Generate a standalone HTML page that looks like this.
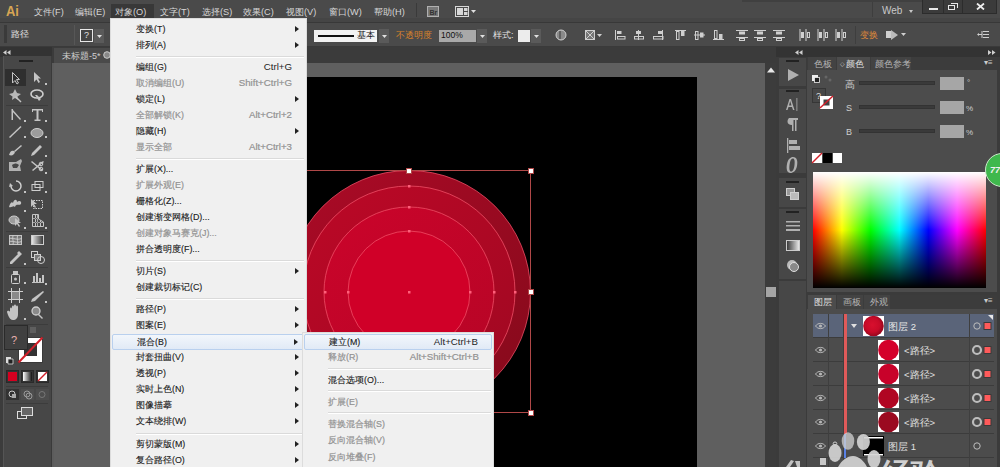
<!DOCTYPE html>
<html><head><meta charset="utf-8">
<style>
*{box-sizing:border-box;margin:0;padding:0}
html,body{width:1000px;height:467px;overflow:hidden;background:#5c5c5c;font-family:"Liberation Sans",sans-serif;}
.a{position:absolute}
.t{position:absolute;white-space:nowrap;line-height:1}
#menubar{left:0;top:0;width:1000px;height:23px;background:linear-gradient(#4a4a4a 0 18px,#454545 18px 22px,#383838 22px)}
#menubar .t{color:#d6d6d6;font-size:9.2px;top:8px}
#ctrl{left:0;top:23px;width:1000px;height:24px;background:#4a4a4a;border-bottom:1px solid #3a3a3a}
#ctrl .t{color:#e0e0e0;font-size:9.5px}
#ctrl > *{margin-top:-2px}
#tools{left:0;top:47px;width:52px;height:420px;background:#3c3c3c}
#tabstrip{left:52px;top:47px;width:726px;height:16px;background:#3b3b3b}
#canvas{left:54px;top:63px;width:711px;height:404px;background:#5f5f5f}
#artboard{left:280px;top:77px;width:417px;height:390px;background:#000}
#vscroll{left:765px;top:63px;width:12px;height:404px;background:#3c3c3c}
#iconcol{left:776px;top:47px;width:32px;height:420px;background:#3b3b3b}
#panel{left:806px;top:47px;width:194px;height:420px;background:#3b3b3b}
.menu{background:#f0f0f0;border:1px solid #dcdcdc}
.menu .gut{display:none}
.mi{position:absolute;left:1px;right:1px;height:16px}
.mi .l{position:absolute;left:24px;top:2.5px;font-size:8.9px;color:#1a1a1a;-webkit-text-stroke:0.12px #1a1a1a;white-space:nowrap;line-height:1.1}
.mi .r{position:absolute;right:13px;top:2px;font-size:9.7px;color:#1e1e1e;white-space:nowrap;line-height:1.1}
.mi.d .l,.mi.d .r{color:#8d8d8d;-webkit-text-stroke:0.2px #9a9a9a}
.mi .ar{position:absolute;right:6px;top:4px;width:0;height:0;border-left:4px solid #222;border-top:3px solid transparent;border-bottom:3px solid transparent}
.sep{position:absolute;left:25px;right:2px;height:2px;border-top:1px solid #dadada;border-bottom:1px solid #fff}
.hl{background:linear-gradient(#f2f6fb,#e1eaf6);border:1px solid #b9d0ee;border-radius:2px}
.ico{position:absolute}
.tabs .t{font-size:9px;color:#bdbdbd}
</style></head><body>

<!-- MENU BAR -->
<div id="menubar" class="a">
    <div class="t" style="left:6px;top:3px;font-size:15px;font-weight:bold;color:#d8a654;transform:scaleX(.86);transform-origin:0 0">Ai</div>
  <div class="t" style="left:34px">文件(F)</div>
  <div class="t" style="left:75px">编辑(E)</div>
  <div class="a" style="left:111px;top:4px;width:43px;height:14px;background:#383838"></div>
  <div class="t" style="left:115px">对象(O)</div>
  <div class="t" style="left:160px">文字(T)</div>
  <div class="t" style="left:202px">选择(S)</div>
  <div class="t" style="left:243px">效果(C)</div>
  <div class="t" style="left:286px">视图(V)</div>
  <div class="t" style="left:329px">窗口(W)</div>
  <div class="t" style="left:374px">帮助(H)</div>
  <div class="a" style="left:416px;top:3px;width:1px;height:14px;background:#3a3a3a"></div>
  <svg class="a" style="left:420px;top:0" width="60" height="20">
   <rect x="7.5" y="6.5" width="11" height="10" fill="#787878" stroke="#b0b0b0"/>
   <text x="9.5" y="14.5" font-size="7" font-weight="bold" fill="#333" font-family="Liberation Sans">Br</text>
   <rect x="35.5" y="6.5" width="13" height="10" fill="#494949" stroke="#d8d8d8"/>
   <rect x="37" y="8" width="6" height="7" fill="#d8d8d8"/>
   <rect x="44" y="8" width="3.5" height="3" fill="#d8d8d8"/><rect x="44" y="12" width="3.5" height="3" fill="#d8d8d8"/>
   <path d="M51 10 H56 L53.5 13Z" fill="#e0e0e0"/>
  </svg>
  
  
  <div class="a" style="left:742px;top:0;width:180px;height:2px;background:#404040"></div><div class="a" style="left:872px;top:2px;width:1px;height:15px;background:#3e3e3e"></div>
  <div class="t" style="left:882px;top:6px;font-size:10px;color:#c8c8c8">Web</div>
  <svg class="a" style="left:909px;top:10px" width="4" height="3"><path d="M0 0 H4 L2 3Z" fill="#c8c8c8"/></svg>
  <div class="a" style="left:922px;top:0;width:75px;height:14px;background:#3b3b3b;border:1px solid #2c2c2c;border-top:none"></div>
  <div class="a" style="left:943px;top:0;width:1px;height:13px;background:#2c2c2c"></div>
  <div class="a" style="left:962px;top:0;width:1px;height:13px;background:#2c2c2c"></div>
  <div class="a" style="left:929px;top:8px;width:9px;height:2px;background:#e8e8e8"></div>
  <div class="a" style="left:948px;top:5px;width:7px;height:5px;border:1px solid #e8e8e8"></div>
  <div class="a" style="left:951px;top:3px;width:7px;height:5px;border:1.2px solid #e8e8e8;border-left:none;border-bottom:none"></div>
  <svg class="a" style="left:976px;top:3px" width="9" height="7"><path d="M1 0.5 L8 6.5 M8 0.5 L1 6.5" stroke="#eee" stroke-width="1.8"/></svg>
</div>

<!-- CONTROL BAR -->
<div id="ctrl" class="a">
  <div class="a" style="left:4px;top:4px;width:3px;height:18px;background:#3a3a3a"></div>
  <div class="t" style="left:11px;top:9px;font-size:9px">路径</div><div class="a" style="left:74px;top:4px;width:1px;height:20px;background:#575757"></div>
  <div class="a" style="left:80px;top:8px;width:13px;height:13px;border:1px solid #e8e8e8;background:#444"></div>
  <div class="t" style="left:84px;top:10px;font-size:9px">?</div>
  <div class="a" style="left:94px;top:8px;width:10px;height:14px;background:#5a5a5a"></div><svg class="a" style="left:97px;top:14px" width="5" height="3"><path d="M0 0H5L2.5 3Z" fill="#e0e0e0"/></svg>
  <div class="a" style="left:314px;top:9px;width:63px;height:12px;background:#f2f2f2"></div>
  <div class="a" style="left:318px;top:14px;width:36px;height:2px;background:#111"></div>
  <div class="t" style="left:357px;top:10px;color:#111;font-size:9px">基本</div>
  <div class="a" style="left:379px;top:8px;width:10px;height:14px;background:#5a5a5a"></div><svg class="a" style="left:382px;top:14px" width="5" height="3"><path d="M0 0H5L2.5 3Z" fill="#e0e0e0"/></svg>
  <div class="t" style="left:396px;top:10px;color:#d9822b;font-size:9px">不透明度</div>
  <div class="a" style="left:439px;top:9px;width:37px;height:12px;background:#a9a9a9"></div>
  <div class="t" style="left:441px;top:10px;color:#111;font-size:8.5px">100%</div>
  <div class="a" style="left:477px;top:8px;width:10px;height:14px;background:#5a5a5a"></div><svg class="a" style="left:480px;top:14px" width="5" height="3"><path d="M0 0H5L2.5 3Z" fill="#e0e0e0"/></svg>
  <div class="t" style="left:493px;top:10px;font-size:9px">样式:</div>
  <div class="a" style="left:518px;top:9px;width:12px;height:12px;background:#ececec"></div>
  <div class="a" style="left:531px;top:8px;width:10px;height:14px;background:#5a5a5a"></div><svg class="a" style="left:534px;top:14px" width="5" height="3"><path d="M0 0H5L2.5 3Z" fill="#e0e0e0"/></svg>
  <svg class="a" style="left:0;top:-1px" width="1000" height="27" viewBox="0 20 1000 27">
<g fill="#cfcfcf">
<circle cx="561" cy="35" r="5" fill="#8a8a8a" stroke="#cfcfcf" stroke-width="1"/><path d="M560 31 v8" stroke="#444" stroke-width="1.2"/>
<rect x="585.5" y="30.5" width="9" height="9" fill="#777" stroke="#cfcfcf"/><path d="M586 31 L594 39 M594 31 L586 39" stroke="#cfcfcf"/><path d="M597 34 h5 l-2.5 3Z"/>
<rect x="615.0" y="30" width="1" height="10"/><rect x="617" y="31" width="4.5" height="3"/><rect x="617.5" y="36.5" width="7.5" height="2.5" fill="none" stroke="#cfcfcf" stroke-width="1"/>
<rect x="638.0" y="30" width="1" height="10"/><rect x="636" y="31" width="5" height="3"/><rect x="634.5" y="36.5" width="9" height="2.5" fill="none" stroke="#cfcfcf" stroke-width="1"/>
<rect x="662.0" y="30" width="1" height="10"/><rect x="658" y="31" width="4.5" height="3"/><rect x="653.5" y="36.5" width="9.5" height="2.5" fill="none" stroke="#cfcfcf" stroke-width="1"/>
<rect x="675" y="30.0" width="11" height="1"/><rect x="676.5" y="31.5" width="2.5" height="8" fill="none" stroke="#cfcfcf"/><rect x="681" y="31" width="3.5" height="5"/>
<rect x="694" y="34.5" width="11" height="1"/><rect x="695.5" y="31.5" width="2.5" height="8" fill="none" stroke="#cfcfcf"/><rect x="700" y="32.5" width="3.5" height="5"/>
<rect x="713" y="39.0" width="11" height="1"/><rect x="714.5" y="30.5" width="2.5" height="8" fill="none" stroke="#cfcfcf"/><rect x="719" y="34" width="3.5" height="5"/>
<rect x="736" y="30" width="12" height="1"/><rect x="736" y="37" width="12" height="1"/><rect x="739" y="31.5" width="6" height="3"/><rect x="739.5" y="38.5" width="5" height="2" fill="none" stroke="#cfcfcf"/>
<rect x="754" y="30" width="12" height="1"/><rect x="754" y="37" width="12" height="1"/><rect x="757" y="31.5" width="6" height="3"/><rect x="757.5" y="38.5" width="5" height="2" fill="none" stroke="#cfcfcf"/>
<rect x="773" y="30" width="12" height="1"/><rect x="773" y="37" width="12" height="1"/><rect x="776" y="31.5" width="6" height="3"/><rect x="776.5" y="38.5" width="5" height="2" fill="none" stroke="#cfcfcf"/>
<rect x="799.5" y="29" width="1" height="12"/><rect x="805.5" y="29" width="1" height="12"/><rect x="801" y="32" width="3" height="6" /><rect x="807.5" y="32.5" width="2" height="5" fill="none" stroke="#cfcfcf"/>
<rect x="817.5" y="29" width="1" height="12"/><rect x="823.5" y="29" width="1" height="12"/><rect x="819" y="32" width="3" height="6" /><rect x="825.5" y="32.5" width="2" height="5" fill="none" stroke="#cfcfcf"/>
<rect x="835.5" y="29" width="1" height="12"/><rect x="841.5" y="29" width="1" height="12"/><rect x="837" y="32" width="3" height="6" /><rect x="843.5" y="32.5" width="2" height="5" fill="none" stroke="#cfcfcf"/>
<rect x="855" y="26" width="1" height="18" fill="#3e3e3e"/>
<rect x="886" y="31" width="6" height="7"/><path d="M891 30 L898 35 L891 40Z" fill="#bbb"/><path d="M901 33 h5 l-2.5 3Z"/>
<path d="M978 34.5 h4 M982 31 v7" stroke="#cfcfcf"/><rect x="983" y="31" width="6" height="1"/><rect x="983" y="34" width="6" height="1"/><rect x="983" y="37" width="6" height="1"/><path d="M977 34.5 l2 -1.5 v3Z"/>
</g></svg>
<div class="t" style="left:860px;top:10px;color:#e08a3a;font-size:9px">变换</div>

</div>

<!-- LEFT TOOLS -->
<div id="tools" class="a">
<div class="a" style="left:0;top:0;width:52px;height:10px;background:#333"></div>
<svg class="a" style="left:3px;top:3px" width="8" height="5"><path d="M0 2.5 L3.5 0 V5Z M4 2.5 L7.5 0 V5Z" fill="#cfcfcf"/></svg>
<div class="a" style="left:3px;top:9px;width:49px;height:411px;background:#474747;border-left:1px solid #555;border-right:1px solid #3a3a3a"></div>
<div class="a" style="left:19px;top:13px;width:14px;height:2px;background:#222"></div>
<div class="a" style="left:5px;top:22px;width:21px;height:17px;background:#2f2f2f"></div>
<svg class="a" style="left:0;top:0" width="52" height="420" viewBox="0 47 52 420">
 <g fill="none" stroke="#c4c4c4" stroke-width="1">
  <!-- selection outline arrow -->
  <path d="M12.5 72.5 L12.5 83 L15 80.5 L17 84 L18.5 83 L16.5 79.5 L19.5 79.5 Z"/>
 </g>
 <g fill="#c4c4c4">
  <!-- direct selection -->
  <path d="M34 72 L34 82 L36.5 79.5 L38.5 83 L40 82 L38 78.5 L41 78.5 Z"/>
  <rect x="45" y="83" width="2" height="2"/>
  <!-- magic wand -->
  <path d="M9 94 L13 93 L15 89 L17 93 L21 94 L17.5 96.5 L18 100 L15 98 L12 100 L12.5 96.5Z" opacity=".9"/>
  <path d="M16 96 L21.5 101.5 L20.5 102.5 L15 97Z"/>
  <!-- lasso -->
  <ellipse cx="37" cy="94" rx="6" ry="4" fill="none" stroke="#cfcfcf" stroke-width="1.6"/>
  <path d="M35 95 L39 101 L41 99 L37 95Z"/>
  <!-- pen -->
  <path d="M12 109 L13 110 L21 119 L20 120 L12 111Z"/>
  <rect x="11.5" y="109" width="1.5" height="11"/>
  <rect x="24" y="120" width="2" height="2"/>
  <!-- T -->
  <path d="M32 109 H43 V112 H42 V110.5 H38.5 V119.5 H40.5 V121 H34.5 V119.5 H36.5 V110.5 H33 V112 H32Z"/>
  <rect x="45" y="120" width="2" height="2"/>
  <!-- line -->
  <path d="M9 137 L20.5 126 L21.5 127 L10 138Z"/>
  <rect x="24" y="136" width="2" height="2"/>
  <!-- ellipse -->
  <ellipse cx="37" cy="133" rx="6" ry="4.5" fill="#9c9c9c" stroke="#cfcfcf" stroke-width="1"/>
  <rect x="45" y="136" width="2" height="2"/>
  <!-- brush -->
  <path d="M21 145 L22 146 L15 152 L14 151Z"/>
  <path d="M9 155 C10 151 12 150 14 151 L15 152 C14 155 12 156 9 155Z"/>
  <!-- pencil -->
  <path d="M40 145 L42 147 L34 155 L31 156 L32 153Z"/>
  <rect x="45" y="155" width="2" height="2"/>
  <!-- blob brush/eraser -->
  <path d="M9 162 L16 162 L21 159 L22 161 L20 166 L21 171 L9 171Z" opacity=".85"/>
  <path d="M12 165 C15 163 17 163 19 165 L17 168 L13 168Z" fill="#474747"/>
  <!-- scissors -->
  <path d="M32 161 L43 170 L42 171 L31 162Z M43 161 L44 162 L33 171 L32 170Z"/>
  <circle cx="41" cy="164" r="1.8" fill="none" stroke="#cfcfcf"/>
  <circle cx="41" cy="169" r="1.8" fill="none" stroke="#cfcfcf"/>
  <rect x="45" y="172" width="2" height="2"/>
  <!-- rotate -->
  <path d="M16 181 A5 5 0 1 1 11 186" fill="none" stroke="#cfcfcf" stroke-width="1.5"/>
  <path d="M10 183 L13 186 L9 187Z"/>
  <rect x="24" y="191" width="2" height="2"/>
  <!-- scale -->
  <rect x="32" y="184.5" width="8" height="6" fill="none" stroke="#cfcfcf"/>
  <rect x="35" y="181.5" width="8" height="6" fill="none" stroke="#cfcfcf"/>
  <rect x="45" y="191" width="2" height="2"/>
  <!-- warp -->
  <path d="M9 207 C10 203 12 201 13 203 C14 199 17 199 17 202 C19 200 22 201 21 204 C19 206 16 203 15 207 C13 205 12 208 9 207Z"/>
  <rect x="24" y="210" width="2" height="2"/>
  <!-- free transform -->
  <rect x="33.5" y="200.5" width="9" height="8" fill="none" stroke="#cfcfcf" stroke-dasharray="1.5 1"/>
  <path d="M31 199 L31 207 L33 205 L35 208 L36 207 L34 204 L37 204Z"/>
  <!-- shape builder -->
  <ellipse cx="14" cy="220" rx="5" ry="4" fill="#9c9c9c" stroke="#cfcfcf"/>
  <path d="M15 218 L15 226 L17 224 L19 227 L20 226 L18 223 L21 223Z"/>
  <rect x="24" y="227" width="2" height="2"/>
  <!-- perspective grid -->
  <path d="M32.5 214.5 V226.5 H43.5 V222 L38.5 219 V214.5 Z" fill="none" stroke="#c4c4c4"/>
  <path d="M35 215 V226 H36 V215Z M37 215 V226 H37.8 V215Z M32.5 218 H38.5 V218.8 H32.5Z M32.5 222 H43.5 V222.8 H32.5Z M40 220 V226 H41 V220.5Z" />
  <rect x="45" y="227" width="2" height="2"/>
  <!-- mesh -->
  <rect x="9.5" y="235.5" width="12" height="9" fill="#777" stroke="#c4c4c4"/>
  <path d="M9.5 238.5 C13 237.5 17 240.5 21.5 238.5 M9.5 241.5 C13 240.5 17 243.5 21.5 241.5 M13 235.5 C12 239 14 242 13 244.5 M17.5 235.5 C16.5 239 18.5 242 17.5 244.5" fill="none" stroke="#d0d0d0" stroke-width=".9"/>
  <!-- gradient -->
  <rect x="31.5" y="235.5" width="12" height="9" fill="url(#tg)" stroke="#cfcfcf"/>
  <!-- eyedropper -->
  <path d="M19 251 L22 254 L20 256 L12 264 L10 264 L10 262 L18 254 L17 253Z"/>
  <rect x="24" y="263" width="2" height="2"/>
  <!-- blend -->
  <rect x="31.5" y="251.5" width="6" height="6" fill="none" stroke="#cfcfcf"/>
  <rect x="34.5" y="254.5" width="6" height="6" fill="#777" stroke="#cfcfcf"/>
  <circle cx="41" cy="260" r="3.5" fill="none" stroke="#cfcfcf"/>
  <!-- symbol sprayer -->
  <rect x="11.5" y="274.5" width="8" height="9" fill="none" stroke="#cfcfcf" rx="1"/>
  <rect x="13" y="271" width="5" height="3"/>
  <circle cx="15.5" cy="279" r="1.5"/>
  <rect x="24" y="282" width="2" height="2"/>
  <!-- graph -->
  <path d="M32 282 H44 V283 H32Z M33 276 h2 v6 h-2Z M36 273 h2 v9 h-2Z M39 278 h2 v4 h-2Z M42 275 h2 v7 h-2Z"/>
  <rect x="45" y="283" width="2" height="2"/>
  <!-- artboard -->
  <rect x="11" y="291" width="9" height="9" fill="#8a8a8a"/>
  <path d="M8 291.5 H23 M8 299.5 H23 M11.5 288 V303 M19.5 288 V303" stroke="#cfcfcf" fill="none"/>
  <!-- slice -->
  <path d="M43 291 L44 292 L35 301 L31 302 L32 299Z"/>
  <rect x="45" y="301" width="2" height="2"/>
  <!-- hand -->
  <path d="M10 312 L10 309 C10 307 12 307 12 309 L12 307 C12 305 14 305 14 307 L14 306 C14 304 16 304 16 306 L16 307 C16 305 18 305 18 307 L18 314 C18 318 16 320 13 320 C11 320 9 318 8 315 L7 312 C7 311 9 310 10 312Z"/>
  <rect x="24" y="318" width="2" height="2"/>
  <!-- zoom -->
  <circle cx="36" cy="311" r="4" fill="#8a8a8a" stroke="#cfcfcf" stroke-width="1.3"/>
  <path d="M38.5 313.5 L43 318 L42 319 L37.5 314.5Z"/>
 </g>
 <defs><linearGradient id="tg"><stop offset="0" stop-color="#eee"/><stop offset="1" stop-color="#333"/></linearGradient>
 <linearGradient id="tg2"><stop offset="0" stop-color="#fff"/><stop offset="1" stop-color="#111"/></linearGradient></defs>
 <!-- separators -->
 <g fill="#3c3c3c">
  <rect x="6" y="105" width="42" height="1"/><rect x="6" y="231" width="42" height="1"/><rect x="6" y="267" width="42" height="1"/><rect x="6" y="324" width="42" height="1"/><rect x="6" y="386" width="42" height="1"/><rect x="6" y="403" width="42" height="1"/>
 </g>
 <!-- fill / stroke -->
 <rect x="18.5" y="337.5" width="24" height="25" fill="#fff" stroke="#3a3a3a"/>
 <rect x="24" y="343" width="13" height="13" fill="#333"/>
 <path d="M18.5 362.5 L42.5 337.5" stroke="#d2202a" stroke-width="2"/>
 <rect x="4.5" y="325.5" width="23" height="24" fill="#404040" stroke="#2a2a2a"/>
 <text x="11" y="344" font-size="11" fill="#e8b0b0" font-family="Liberation Sans">?</text>
 <rect x="30" y="327" width="6" height="6" fill="#777" opacity=".5"/>
 <path d="M6 357 h5 v6 h-5Z" fill="#ddd"/><path d="M8 359 h5 v5 h-5Z" fill="#222" stroke="#ddd" stroke-width=".8"/>
 <!-- color / gradient / none -->
 <rect x="6.5" y="370.5" width="12" height="12" fill="#333" stroke="#2a2a2a"/>
 <rect x="8" y="372" width="9" height="9" fill="#d60020"/>
 <rect x="21.5" y="370.5" width="12" height="12" fill="#333" stroke="#2a2a2a"/>
 <rect x="23" y="372" width="9" height="9" fill="url(#tg2)"/>
 <rect x="36.5" y="370.5" width="12" height="12" fill="#333" stroke="#2a2a2a"/>
 <rect x="38" y="372" width="9" height="9" fill="#fff"/>
 <path d="M38 381 L47 372" stroke="#d2202a" stroke-width="1.5"/>
 <!-- draw modes -->
 <rect x="6" y="389" width="13" height="11" fill="#333"/>
 <rect x="21" y="389" width="13" height="11" fill="#4d4d4d"/>
 <rect x="36" y="389" width="13" height="11" fill="#4d4d4d"/>
 <circle cx="12" cy="394" r="3" fill="none" stroke="#ccc"/><rect x="12" y="394" width="4" height="4" fill="#aaa"/>
 <circle cx="27" cy="394" r="3" fill="none" stroke="#999"/><circle cx="29" cy="396" r="3" fill="none" stroke="#999"/>
 <circle cx="42" cy="394.5" r="3" fill="none" stroke="#777"/>
 <!-- screen mode -->
 <rect x="17.5" y="411.5" width="9" height="7" fill="none" stroke="#ddd"/>
 <rect x="21.5" y="407.5" width="11" height="8" fill="#666" stroke="#ddd"/>
</svg>
</div>

<!-- DOC TAB STRIP -->
<div id="tabstrip" class="a"></div>
<div class="a" style="left:54px;top:48px;width:56px;height:15px;background:#4a4a4a"></div>
<div class="t" style="left:62px;top:52px;font-size:9px;color:#cfcfcf">未标题-5*</div><svg class="a" style="left:103px;top:51px" width="8" height="8"><circle cx="4" cy="4" r="3.3" fill="#888" stroke="#ccc" stroke-width="1"/></svg>
<div id="canvas" class="a"></div>
<div id="artboard" class="a"></div>
<svg class="a" style="left:0;top:0" width="1000" height="467" viewBox="0 0 1000 467">
 <defs>
  <linearGradient id="g1" x1="0.2" y1="0.1" x2="0.9" y2="0.9"><stop offset="0" stop-color="#a60a25"/><stop offset="1" stop-color="#880a1c"/></linearGradient>
  <linearGradient id="g2" x1="0.2" y1="0.1" x2="0.9" y2="0.9"><stop offset="0" stop-color="#b80826"/><stop offset="1" stop-color="#a20822"/></linearGradient>
  <linearGradient id="g3" x1="0.2" y1="0.1" x2="0.9" y2="0.9"><stop offset="0" stop-color="#c8042a"/><stop offset="1" stop-color="#b80526"/></linearGradient>
 </defs>
 <g stroke="#f05068" stroke-width="0.9" stroke-opacity=".85">
  <circle cx="409" cy="292" r="121.5" fill="url(#g1)"/>
  <circle cx="409" cy="292" r="106" fill="url(#g2)"/>
  <circle cx="409" cy="292" r="85" fill="url(#g3)"/>
  <circle cx="409" cy="292" r="61" fill="#d00028"/>
 </g>
 <rect x="287.5" y="170.5" width="243" height="242" fill="none" stroke="#b04848" stroke-width="1"/>
 <g fill="#ff5f7a">
  <rect x="408" y="185" width="2.5" height="2.5"/><rect x="408" y="206" width="2.5" height="2.5"/><rect x="408" y="230" width="2.5" height="2.5"/>
  <rect x="408" y="291" width="2.5" height="2.5"/>
  <rect x="324" y="291" width="2.5" height="2.5"/><rect x="347" y="291" width="2.5" height="2.5"/>
  <rect x="469" y="291" width="2.5" height="2.5"/><rect x="493" y="291" width="2.5" height="2.5"/><rect x="514" y="291" width="2.5" height="2.5"/>
 </g>
 <g fill="#fff" stroke="#b04848" stroke-width="1">
  <rect x="406.5" y="168.5" width="5" height="5"/><rect x="528.5" y="168.5" width="5" height="5"/>
  <rect x="528.5" y="289.5" width="5" height="5"/><rect x="528.5" y="410.5" width="5" height="5"/>
 </g>
</svg>
<div id="vscroll" class="a"></div>
<svg class="a" style="left:767px;top:67px" width="8" height="6"><path d="M0 5.5 L4 0.5 L8 5.5Z" fill="#e8e8e8"/></svg>
<div class="a" style="left:766px;top:287px;width:11px;height:10px;background:#a5a5a5"></div>
<div id="iconcol" class="a">
<div class="a" style="left:0;top:0;width:32px;height:10px;background:#333"></div>
<svg class="a" style="left:19px;top:3px" width="8" height="5"><path d="M0 2.5 L3.5 0 V5Z M4 2.5 L7.5 0 V5Z" fill="#cfcfcf"/></svg>
<div class="a" style="left:3px;top:11px;width:27px;height:28px;background:#474747"></div>
<div class="a" style="left:3px;top:42px;width:27px;height:84px;background:#474747"></div>
<div class="a" style="left:3px;top:131px;width:27px;height:29px;background:#474747"></div>
<div class="a" style="left:3px;top:162px;width:27px;height:70px;background:#474747"></div>
<div class="a" style="left:3px;top:234px;width:27px;height:186px;background:#474747"></div>
<g></g>
<svg class="a" style="left:0;top:0" width="32" height="420" viewBox="776 47 32 420">
 <g fill="#222"><rect x="786" y="60" width="13" height="2"/><rect x="786" y="90" width="13" height="2"/><rect x="786" y="181" width="13" height="2"/><rect x="786" y="211" width="13" height="2"/></g>
 <g fill="#b0b0b0">
  <path d="M788 69 L799 75 L788 81Z" fill="#b0b0b0"/>
  <path d="M786 110 L789.5 99 L791 99 L794.5 110 H793 L792 107 H788.5 L787.5 110Z M789 105.5 H791.5 L790.2 101Z"/>
  <rect x="796.5" y="98" width="0.8" height="13"/>
  <path d="M789 118 H798 V120 H796.5 V131 H795 V120 H793.5 V131 H792 V125 C789 125 787.5 123.5 787.5 121.5 C787.5 119.5 789 118 789 118Z"/>
  <rect x="787" y="138" width="1.3" height="15"/>
  <rect x="789" y="140" width="8" height="4"/><rect x="789" y="146" width="11" height="4"/>
  <path d="M793 157 C797 157 798 161 797 166 C796 171 793 173 790.5 173 C787 173 786 169 787 164 C788 159 790.5 157 793 157Z M792.8 158.5 C791 158.5 790 161 789.5 165 C789 169 789.5 171.5 791 171.5 C793 171.5 794 169 794.5 165 C795 161 794.5 158.5 792.8 158.5Z"/>
  <rect x="786.5" y="188.5" width="8" height="7" fill="#999" stroke="#d0d0d0"/>
  <rect x="790.5" y="192.5" width="8" height="7" fill="#bbb" stroke="#d0d0d0"/>
  <rect x="786" y="221" width="14" height="1.5"/><rect x="786" y="225" width="14" height="1.5"/><rect x="786" y="229" width="14" height="2"/>
  <rect x="786.5" y="240.5" width="13" height="10" fill="url(#icg)" stroke="#ccc"/>
  <circle cx="792" cy="265" r="5" fill="#bbb"/><circle cx="794" cy="267" r="4.5" fill="#888" stroke="#ddd"/>
 </g>
 <defs><linearGradient id="icg"><stop offset="0" stop-color="#333"/><stop offset="1" stop-color="#eee"/></linearGradient></defs>
</svg>
</div>
<div id="panel" class="a">
<div class="a" style="left:0;top:0;width:194px;height:10px;background:#333"></div>
<svg class="a" style="left:182px;top:3px" width="8" height="5"><path d="M3.5 2.5 L0 0 V5Z M7.5 2.5 L4 0 V5Z" fill="#cfcfcf"/></svg>
<!-- color panel -->
<div class="a" style="left:1px;top:10px;width:190px;height:13px;background:#3c3c3c"></div>
<div class="a" style="left:2px;top:10px;width:28px;height:13px;background:#434343"></div>
<div class="a" style="left:31px;top:10px;width:33px;height:13px;background:#4c4c4c"></div>
<div class="a" style="left:65px;top:10px;width:40px;height:13px;background:#434343"></div>
<div class="t" style="left:8px;top:13px;font-size:9px;color:#b5b5b5">色板</div>
<div class="t" style="left:40px;top:13px;font-size:9px;color:#e0e0e0">颜色</div><div class="t" style="left:34px;top:14px;font-size:6px;color:#ddd">◇</div>
<div class="t" style="left:69px;top:13px;font-size:9px;color:#b5b5b5">颜色参考</div>
<div class="t" style="left:178px;top:12px;font-size:8px;color:#ccc">▾≡</div>
<div class="a" style="left:1px;top:23px;width:190px;height:218px;background:#4c4c4c"></div>
<svg class="a" style="left:0;top:0" width="194" height="420" viewBox="806 47 194 420">
 <!-- fill/stroke mini -->
 <rect x="812" y="75" width="6" height="6" fill="#eee"/><rect x="814.5" y="77.5" width="5" height="5" fill="#222" stroke="#eee" stroke-width=".8"/>
 <g fill="#666"><circle cx="826" cy="77" r="1.5"/><circle cx="830" cy="80" r="1.5"/></g>
 <rect x="812.5" y="88.5" width="13" height="14" fill="#474747" stroke="#363636"/>
 <text x="816" y="99" font-size="9" fill="#ddd" font-family="Liberation Sans">?</text>
 <rect x="820" y="96" width="13" height="13" fill="#fff"/>
 <rect x="823.5" y="99.5" width="6" height="6" fill="#444"/>
 <path d="M820 108 L833 96" stroke="#d2202a" stroke-width="1.5"/>
 <!-- sliders -->
 <g font-family="Liberation Sans" font-size="9" fill="#cfcfcf">
  <text x="845" y="87.5" font-size="9.5">高</text><text x="846" y="111">S</text><text x="846" y="135">B</text>
  <text x="967" y="85" font-size="8">°</text><text x="966" y="111" font-size="8">%</text><text x="966" y="135" font-size="8">%</text>
 </g>
 <g fill="#3a3a3a" stroke="#333">
  <rect x="859.5" y="81.5" width="75" height="3"/><rect x="859.5" y="105.5" width="75" height="3"/><rect x="859.5" y="129.5" width="75" height="3"/>
 </g>
 <g fill="#a6a6a6">
  <rect x="940" y="77" width="24" height="13"/><rect x="940" y="101" width="24" height="13"/><rect x="940" y="125" width="24" height="13"/>
 </g>
 <!-- swatches -->
 <rect x="812" y="153" width="10" height="10" fill="#fff"/><path d="M812 163 L822 153" stroke="#d2202a" stroke-width="1.5"/>
 <rect x="823" y="153" width="9" height="10" fill="#000"/>
 <rect x="833" y="153" width="9" height="10" fill="#fff"/>
 <!-- spectrum -->
 <defs>
  <linearGradient id="hue" x1="0" x2="1"><stop offset="0" stop-color="#f00"/><stop offset=".167" stop-color="#ff0"/><stop offset=".333" stop-color="#0f0"/><stop offset=".5" stop-color="#0ff"/><stop offset=".667" stop-color="#00f"/><stop offset=".833" stop-color="#f0f"/><stop offset="1" stop-color="#f00"/></linearGradient>
  <linearGradient id="wb" x1="0" x2="0" y1="0" y2="1"><stop offset="0" stop-color="#fff" stop-opacity="1"/><stop offset=".5" stop-color="#fff" stop-opacity="0"/><stop offset=".5" stop-color="#000" stop-opacity="0"/><stop offset="1" stop-color="#000" stop-opacity="1"/></linearGradient>
 </defs>
 <rect x="813" y="172" width="173" height="116" fill="url(#hue)"/>
 <rect x="813" y="172" width="173" height="116" fill="url(#wb)"/>
</svg>
<!-- layers panel -->
<div class="a" style="left:1px;top:241px;width:190px;height:4px;background:#4c4c4c"></div><div class="a" style="left:1px;top:245px;width:190px;height:3px;background:#3b3b3b"></div>
<div class="a" style="left:1px;top:248px;width:190px;height:14px;background:#3c3c3c"></div>
<div class="a" style="left:2px;top:248px;width:28px;height:14px;background:#4c4c4c"></div>
<div class="a" style="left:31px;top:248px;width:26px;height:14px;background:#434343"></div>
<div class="a" style="left:58px;top:248px;width:26px;height:14px;background:#434343"></div>
<div class="t" style="left:8px;top:251px;font-size:9px;color:#e0e0e0">图层</div>
<div class="t" style="left:37px;top:251px;font-size:9px;color:#b5b5b5">画板</div>
<div class="t" style="left:64px;top:251px;font-size:9px;color:#b5b5b5">外观</div>
<div class="t" style="left:178px;top:250px;font-size:8px;color:#ccc">▾≡</div>
<div class="a" style="left:1px;top:262px;width:190px;height:158px;background:#4c4c4c"></div>

<svg class="a" style="left:0;top:0" width="194" height="420" viewBox="806 47 194 420">
 <defs>
  <radialGradient id="th0" cx=".45" cy=".45"><stop offset="0" stop-color="#d8102e"/><stop offset=".7" stop-color="#c80a28"/><stop offset="1" stop-color="#a00820"/></radialGradient>
 </defs>
 <rect x="813" y="314" width="181" height="24" fill="#5a6479"/>
 <rect x="813" y="337" width="181" height="1" fill="#3c3c3c"/><path d="M988 315 H993 V320Z" fill="#e8e8e8"/>
 <rect x="828" y="314" width="1" height="24" fill="#3f3f3f"/>
 <rect x="843" y="314" width="1" height="24" fill="#3f3f3f"/>
 <rect x="969" y="314" width="1" height="24" fill="#3f3f3f"/>
 <path d="M815.5 326 C818 322.5 823 322.5 825.5 326 C823 329.5 818 329.5 815.5 326Z" fill="none" stroke="#b8b8b8" stroke-width="1"/><circle cx="820.5" cy="326" r="1.6" fill="#b8b8b8"/>
 <rect x="844" y="314" width="3" height="24" fill="#e05a5a"/>
 <path d="M851 324 L857 324 L854 328Z" fill="#e0e0e0"/>
 <rect x="863" y="316" width="21" height="20" fill="#fff"/><circle cx="873.5" cy="326" r="10.3" fill="url(#th0)"/>
 <text x="888" y="329.5" font-size="9.5" fill="#e8e8e8" font-family="Liberation Sans">图层 2</text>
 <circle cx="977" cy="326" r="3.2" fill="none" stroke="#bdbdbd" stroke-width="1"/>
 <rect x="984" y="322.5" width="7" height="7" fill="#ff5a5a" stroke="#3a3a3a" stroke-width="1"/>
 <rect x="813" y="338" width="181" height="24" fill="#4c4c4c"/>
 <rect x="813" y="361" width="181" height="1" fill="#3c3c3c"/>
 <rect x="828" y="338" width="1" height="24" fill="#3f3f3f"/>
 <rect x="843" y="338" width="1" height="24" fill="#3f3f3f"/>
 <rect x="969" y="338" width="1" height="24" fill="#3f3f3f"/>
 <path d="M815.5 350 C818 346.5 823 346.5 825.5 350 C823 353.5 818 353.5 815.5 350Z" fill="none" stroke="#b8b8b8" stroke-width="1"/><circle cx="820.5" cy="350" r="1.6" fill="#b8b8b8"/>
 <rect x="844" y="338" width="3" height="24" fill="#e05a5a"/>
 <rect x="878" y="340" width="21" height="20" fill="#fff"/><circle cx="888.5" cy="350" r="10.3" fill="#d4002a"/>
 <text x="904" y="353.5" font-size="9.5" fill="#e0e0e0" font-family="Liberation Sans">&lt;路径&gt;</text>
 <circle cx="977" cy="350" r="4" fill="none" stroke="#bdbdbd" stroke-width="2.2"/>
 <rect x="984" y="346.5" width="7" height="7" fill="#ff5a5a" stroke="#3a3a3a" stroke-width="1"/>
 <rect x="813" y="362" width="181" height="24" fill="#4c4c4c"/>
 <rect x="813" y="385" width="181" height="1" fill="#3c3c3c"/>
 <rect x="828" y="362" width="1" height="24" fill="#3f3f3f"/>
 <rect x="843" y="362" width="1" height="24" fill="#3f3f3f"/>
 <rect x="969" y="362" width="1" height="24" fill="#3f3f3f"/>
 <path d="M815.5 374 C818 370.5 823 370.5 825.5 374 C823 377.5 818 377.5 815.5 374Z" fill="none" stroke="#b8b8b8" stroke-width="1"/><circle cx="820.5" cy="374" r="1.6" fill="#b8b8b8"/>
 <rect x="844" y="362" width="3" height="24" fill="#e05a5a"/>
 <rect x="878" y="364" width="21" height="20" fill="#fff"/><circle cx="888.5" cy="374" r="10.3" fill="#c8022a"/>
 <text x="904" y="377.5" font-size="9.5" fill="#e0e0e0" font-family="Liberation Sans">&lt;路径&gt;</text>
 <circle cx="977" cy="374" r="4" fill="none" stroke="#bdbdbd" stroke-width="2.2"/>
 <rect x="984" y="370.5" width="7" height="7" fill="#ff5a5a" stroke="#3a3a3a" stroke-width="1"/>
 <rect x="813" y="386" width="181" height="24" fill="#4c4c4c"/>
 <rect x="813" y="409" width="181" height="1" fill="#3c3c3c"/>
 <rect x="828" y="386" width="1" height="24" fill="#3f3f3f"/>
 <rect x="843" y="386" width="1" height="24" fill="#3f3f3f"/>
 <rect x="969" y="386" width="1" height="24" fill="#3f3f3f"/>
 <path d="M815.5 398 C818 394.5 823 394.5 825.5 398 C823 401.5 818 401.5 815.5 398Z" fill="none" stroke="#b8b8b8" stroke-width="1"/><circle cx="820.5" cy="398" r="1.6" fill="#b8b8b8"/>
 <rect x="844" y="386" width="3" height="24" fill="#e05a5a"/>
 <rect x="878" y="388" width="21" height="20" fill="#fff"/><circle cx="888.5" cy="398" r="10.3" fill="#b00622"/>
 <text x="904" y="401.5" font-size="9.5" fill="#e0e0e0" font-family="Liberation Sans">&lt;路径&gt;</text>
 <circle cx="977" cy="398" r="4" fill="none" stroke="#bdbdbd" stroke-width="2.2"/>
 <rect x="984" y="394.5" width="7" height="7" fill="#ff5a5a" stroke="#3a3a3a" stroke-width="1"/>
 <rect x="813" y="410" width="181" height="24" fill="#4c4c4c"/>
 <rect x="813" y="433" width="181" height="1" fill="#3c3c3c"/>
 <rect x="828" y="410" width="1" height="24" fill="#3f3f3f"/>
 <rect x="843" y="410" width="1" height="24" fill="#3f3f3f"/>
 <rect x="969" y="410" width="1" height="24" fill="#3f3f3f"/>
 <path d="M815.5 422 C818 418.5 823 418.5 825.5 422 C823 425.5 818 425.5 815.5 422Z" fill="none" stroke="#b8b8b8" stroke-width="1"/><circle cx="820.5" cy="422" r="1.6" fill="#b8b8b8"/>
 <rect x="844" y="410" width="3" height="24" fill="#e05a5a"/>
 <rect x="878" y="412" width="21" height="20" fill="#fff"/><circle cx="888.5" cy="422" r="10.3" fill="#9b0a20"/>
 <text x="904" y="425.5" font-size="9.5" fill="#e0e0e0" font-family="Liberation Sans">&lt;路径&gt;</text>
 <circle cx="977" cy="422" r="4" fill="none" stroke="#bdbdbd" stroke-width="2.2"/>
 <rect x="984" y="418.5" width="7" height="7" fill="#ff5a5a" stroke="#3a3a3a" stroke-width="1"/>
 <rect x="813" y="434" width="181" height="24" fill="#4c4c4c"/>
 <rect x="813" y="457" width="181" height="1" fill="#3c3c3c"/>
 <rect x="828" y="434" width="1" height="24" fill="#3f3f3f"/>
 <rect x="843" y="434" width="1" height="24" fill="#3f3f3f"/>
 <rect x="969" y="434" width="1" height="24" fill="#3f3f3f"/>
 <path d="M815.5 446 C818 442.5 823 442.5 825.5 446 C823 449.5 818 449.5 815.5 446Z" fill="none" stroke="#b8b8b8" stroke-width="1"/><circle cx="820.5" cy="446" r="1.6" fill="#b8b8b8"/>
 <rect x="863" y="436" width="21" height="20" fill="#000"/><rect x="864" y="437" width="19" height="1.5" fill="#fff"/><rect x="864" y="454" width="19" height="1.5" fill="#fff"/><rect x="844" y="434" width="2" height="26" fill="#5a82e6"/>
 <text x="888" y="449.5" font-size="9.5" fill="#e0e0e0" font-family="Liberation Sans">图层 1</text>
 <circle cx="977" cy="446" r="3.2" fill="none" stroke="#bdbdbd" stroke-width="1"/>
 <rect x="813" y="458" width="181" height="24" fill="#4c4c4c"/>
 <rect x="813" y="481" width="181" height="1" fill="#3c3c3c"/>
 <rect x="828" y="458" width="1" height="24" fill="#3f3f3f"/>
 <rect x="843" y="458" width="1" height="24" fill="#3f3f3f"/>
 <rect x="969" y="458" width="1" height="24" fill="#3f3f3f"/>
 <path d="M815.5 470 C818 466.5 823 466.5 825.5 470 C823 473.5 818 473.5 815.5 470Z" fill="none" stroke="#b8b8b8" stroke-width="1"/><circle cx="820.5" cy="470" r="1.6" fill="#b8b8b8"/>
</svg>

</div>

<!-- OBJECT MENU -->
<div class="a menu" style="left:110px;top:18px;width:197px;height:470px">
<div class="gut"></div>
<div class="mi" style="top:3px"><span class="l">变换(T)</span><i class="ar"></i></div>
<div class="mi" style="top:19px"><span class="l">排列(A)</span><i class="ar"></i></div>
<div class="sep" style="top:37px"></div>
<div class="mi" style="top:41px"><span class="l">编组(G)</span><span class="r">Ctrl+G</span></div>
<div class="mi d" style="top:57px"><span class="l">取消编组(U)</span><span class="r">Shift+Ctrl+G</span></div>
<div class="mi" style="top:73px"><span class="l">锁定(L)</span><i class="ar"></i></div>
<div class="mi d" style="top:89px"><span class="l">全部解锁(K)</span><span class="r">Alt+Ctrl+2</span></div>
<div class="mi" style="top:105px"><span class="l">隐藏(H)</span><i class="ar"></i></div>
<div class="mi d" style="top:121px"><span class="l">显示全部</span><span class="r">Alt+Ctrl+3</span></div>
<div class="sep" style="top:139px"></div>
<div class="mi" style="top:143px"><span class="l">扩展(X)...</span></div>
<div class="mi d" style="top:159px"><span class="l">扩展外观(E)</span></div>
<div class="mi" style="top:175px"><span class="l">栅格化(Z)...</span></div>
<div class="mi" style="top:191px"><span class="l">创建渐变网格(D)...</span></div>
<div class="mi d" style="top:207px"><span class="l">创建对象马赛克(J)...</span></div>
<div class="mi" style="top:223px"><span class="l">拼合透明度(F)...</span></div>
<div class="sep" style="top:241px"></div>
<div class="mi" style="top:245px"><span class="l">切片(S)</span><i class="ar"></i></div>
<div class="mi" style="top:261px"><span class="l">创建裁切标记(C)</span></div>
<div class="sep" style="top:279px"></div>
<div class="mi" style="top:283px"><span class="l">路径(P)</span><i class="ar"></i></div>
<div class="mi" style="top:299px"><span class="l">图案(E)</span><i class="ar"></i></div>
<div class="mi hl" style="top:315px"><span class="l">混合(B)</span><i class="ar"></i></div>
<div class="mi" style="top:331px"><span class="l">封套扭曲(V)</span><i class="ar"></i></div>
<div class="mi" style="top:347px"><span class="l">透视(P)</span><i class="ar"></i></div>
<div class="mi" style="top:363px"><span class="l">实时上色(N)</span><i class="ar"></i></div>
<div class="mi" style="top:379px"><span class="l">图像描摹</span><i class="ar"></i></div>
<div class="mi" style="top:395px"><span class="l">文本绕排(W)</span><i class="ar"></i></div>
<div class="sep" style="top:414px"></div>
<div class="mi" style="top:418px"><span class="l">剪切蒙版(M)</span><i class="ar"></i></div>
<div class="mi" style="top:434px"><span class="l">复合路径(O)</span><i class="ar"></i></div>
</div>

<!-- BLEND SUBMENU -->
<div class="a menu" style="left:302px;top:332px;width:192px;height:150px">
<div class="gut"></div>
<div class="mi hl" style="top:1px"><span class="l">建立(M)</span><span class="r">Alt+Ctrl+B</span></div>
<div class="mi d" style="top:17px"><span class="l">释放(R)</span><span class="r">Alt+Shift+Ctrl+B</span></div>
<div class="sep" style="top:35px"></div>
<div class="mi" style="top:40px"><span class="l">混合选项(O)...</span></div>
<div class="sep" style="top:57px"></div>
<div class="mi d" style="top:62px"><span class="l">扩展(E)</span></div>
<div class="sep" style="top:79px"></div>
<div class="mi d" style="top:84px"><span class="l">替换混合轴(S)</span></div>
<div class="mi d" style="top:100px"><span class="l">反向混合轴(V)</span></div>
<div class="mi d" style="top:117px"><span class="l">反向堆叠(F)</span></div>
</div>

<div class="a" style="left:985px;top:153px;width:34px;height:34px;border-radius:50%;background:#3fb84d;border:1.5px solid #c9e8c9"></div>
<div class="t" style="left:990px;top:166px;font-size:9px;font-style:italic;font-weight:bold;color:#f0f0f0">77</div>
<svg class="a" style="left:0;top:0" width="1000" height="467">
 <g fill="#d2d2d2" fill-opacity=".92">
  <ellipse cx="835" cy="453" rx="6.5" ry="9"/>
  <ellipse cx="848" cy="441" rx="6.3" ry="8.7" fill-opacity=".75"/>
  <ellipse cx="863.4" cy="442" rx="6.5" ry="8"/>
  <ellipse cx="874" cy="459" rx="6.5" ry="9"/>
  <path d="M838 467 C842 460 847 456 853 456 C859 456 864 461 867 467Z"/>
  <rect x="820" y="458" width="6" height="7"/>
  <ellipse cx="835" cy="443.5" rx="1.8" ry="1.5" fill="none" stroke="#d2d2d2"/>
 </g>
 <g fill="#cfcfcf" fill-opacity=".9">
  <path d="M786 467 L791 460 L794 461 L790 467Z M795 461 H800 V467 H797Z"/>
 </g>
</svg>
<div class="t" style="left:881px;top:459px;font-size:31px;font-weight:bold;color:#d0d0d0;letter-spacing:-1px">经验</div>
</body></html>
